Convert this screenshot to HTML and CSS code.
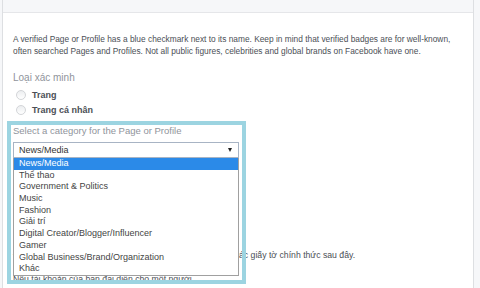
FILE: index.html
```html
<!DOCTYPE html>
<html lang="vi">
<head>
    <meta charset="UTF-8">
    <meta name="viewport" content="width=device-width, initial-scale=1.0">
    <title>Yêu cầu xác minh</title>
    <link rel="stylesheet" href="styles.css">
</head>
<body>

    <div class="card">
        <div class="card-header"></div>

        <div class="card-body">
            <p class="intro">A verified Page or Profile has a blue checkmark next to its name. Keep in mind that verified badges are for well-known, often searched Pages and Profiles. Not all public figures, celebrities and global brands on Facebook have one.</p>

            <div class="field-title">Loại xác minh</div>
            <label class="radio"><span class="dot"></span>Trang</label>
            <label class="radio"><span class="dot"></span>Trang cá nhân</label>

            <div class="category">
                <div class="category-label">Select a category for the Page or Profile</div>
                <div class="select">
                    <span>News/Media</span>
                    <span class="arrow"></span>
                </div>

                <ul class="options">
                    <li class="selected">News/Media</li>
                    <li>Thể thao</li>
                    <li>Government &amp; Politics</li>
                    <li>Music</li>
                    <li>Fashion</li>
                    <li>Giải trí</li>
                    <li>Digital Creator/Blogger/Influencer</li>
                    <li>Gamer</li>
                    <li>Global Business/Brand/Organization</li>
                    <li>Khác</li>
                </ul>

                <!-- khung đánh dấu -->
                <div class="highlight"></div>
            </div>

            <p class="docs">Để xác minh Trang hoặc Trang cá nhân, tải lên một trong các giấy tờ chính thức sau đây.</p>
            <p class="docs docs-person">Nếu tài khoản của bạn đại diện cho một người.</p>
        </div>
    </div>

</body>
</html>
```

FILE: styles.css
```css
body {
    margin: 0;
    background-color: #f6f7f9;
    font-family: "Liberation Sans", Arial, sans-serif;
    color: #4b4f56;
}

.card {
    margin-left: 2px;
    width: 470px;
    height: 288px;
    background-color: #fff;
    border-left: 1px solid #dddfe2;
    border-right: 1px solid #dddfe2;
    overflow: hidden;
}

.card-header {
    height: 12px;
    background-color: #f6f7f9;
    border-bottom: 1px solid #e5e6e9;
}

.card-body {
    padding: 20px 10px 0 10px;
}

.intro {
    margin: 0;
    font-size: 8.35px;
    line-height: 12px;
}

.field-title {
    margin-top: 14px;
    font-size: 10px;
    line-height: 13px;
    color: #90949c;
}

.radio {
    display: flex;
    align-items: center;
    height: 15px;
    font-size: 9px;
    font-weight: bold;
    color: #4b4f56;
}

.radio:first-of-type {
    margin-top: 3px;
}

.dot {
    width: 8px;
    height: 8px;
    margin: 0 6px 0 3px;
    border: 1px solid #d3d5d8;
    border-radius: 50%;
    background: linear-gradient(#eceef0, #fff);
}

.category {
    position: relative;
    margin-top: 8px;
    width: 226px;
}

.category-label {
    font-size: 9.5px;
    line-height: 12px;
    color: #90949c;
}

.select {
    display: flex;
    justify-content: space-between;
    align-items: center;
    height: 14px;
    margin-top: 5px;
    padding: 0 6px 0 5px;
    border: 1px solid #a8b4c4;
    font-size: 9px;
    color: #333;
}

.arrow {
    border-left: 2.5px solid transparent;
    border-right: 2.5px solid transparent;
    border-top: 4px solid #222;
}

.options {
    position: absolute;
    top: 33px;
    left: 0;
    right: 0;
    margin: 0;
    padding: 0;
    list-style: none;
    background-color: #fff;
    border: 1px solid #a0a0a0;
    border-top: none;
    z-index: 2;
}

.options li {
    height: 11.7px;
    line-height: 11.7px;
    padding-left: 5px;
    font-size: 9px;
    color: #444;
}

.options li.selected {
    background-color: #2b8ae8;
    color: #fff;
}

.highlight {
    position: absolute;
    top: -4px;
    left: -6px;
    width: 231px;
    height: 155px;
    border: 4px solid #9cd4e1;
    z-index: 3;
}

.docs {
    margin: 91px 0 0 0;
    font-size: 8.7px;
    line-height: 12px;
    white-space: nowrap;
}

.docs-person {
    margin-top: 11.5px;
}
```
